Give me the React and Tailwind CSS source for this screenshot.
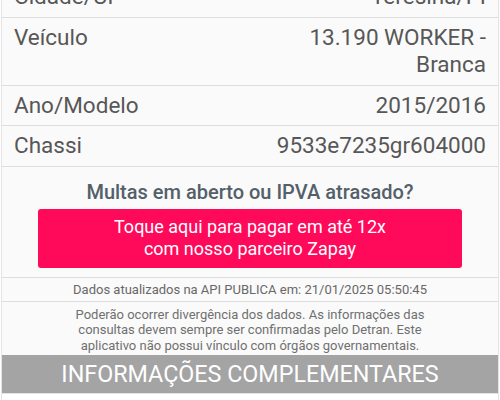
import React from 'react';

const rows = [
    { label: 'Cidade/UF', value: ['Teresina/PI'] },
    { label: 'Veículo', value: ['13.190 WORKER -', 'Branca'] },
    { label: 'Ano/Modelo', value: ['2015/2016'] },
    { label: 'Chassi', value: ['9533e7235gr604000'] },
];

const App = () => {
    return (
        <div className="w-[500px] h-[400px] overflow-hidden bg-white font-['Roboto',sans-serif]">
            <div className="mx-[1px] -mt-[23px] bg-[#fafafa] border-x border-[#e4e4e4]">
                {rows.map((row) => (
                    <div
                        key={row.label}
                        className="flex justify-between pl-[12px] pr-[12px] py-[6px] border-b border-[#dedede] text-[22.5px] leading-[27.5px] text-[#575757]"
                    >
                        <span>{row.label}</span>
                        <div className="text-right">
                            {row.value.map((v) => (
                                <div key={v}>{v}</div>
                            ))}
                        </div>
                    </div>
                ))}

                <div className="pt-[13px] pb-[9px] border-b border-[#dedede] flex flex-col items-center">
                    <p className="text-[20px] leading-[24px] font-medium text-[#53606a]">
                        Multas em aberto ou IPVA atrasado?
                    </p>
                    <button className="mt-[5px] w-[424px] h-[59px] rounded-[3px] bg-[#ff0a5b] text-white text-[18px] leading-[22px]">
                        Toque aqui para pagar em até 12x
                        <br />
                        com nosso parceiro Zapay
                    </button>
                </div>

                <div className="border-b border-[#dedede] text-center text-[13px] leading-[23px] text-[#686868]">
                    Dados atualizados na API PUBLICA em: 21/01/2025 05:50:45
                </div>

                <div className="pt-[5px] pb-[2px] px-[70px] text-center text-[13px] leading-[15.5px] text-[#707070]">
                    Poderão ocorrer divergência dos dados. As informações das consultas devem sempre ser confirmadas pelo Detran. Este aplicativo não possui vínculo com órgãos governamentais.
                </div>

                <div className="h-[38px] bg-[#a4a4a4] flex items-center justify-center text-white text-[23.3px] leading-[38px]">
                    INFORMAÇÕES COMPLEMENTARES
                </div>

                <div className="h-[40px] bg-white border-t border-[#e4e4e4]"></div>
            </div>
        </div>
    );
};

export default App;
